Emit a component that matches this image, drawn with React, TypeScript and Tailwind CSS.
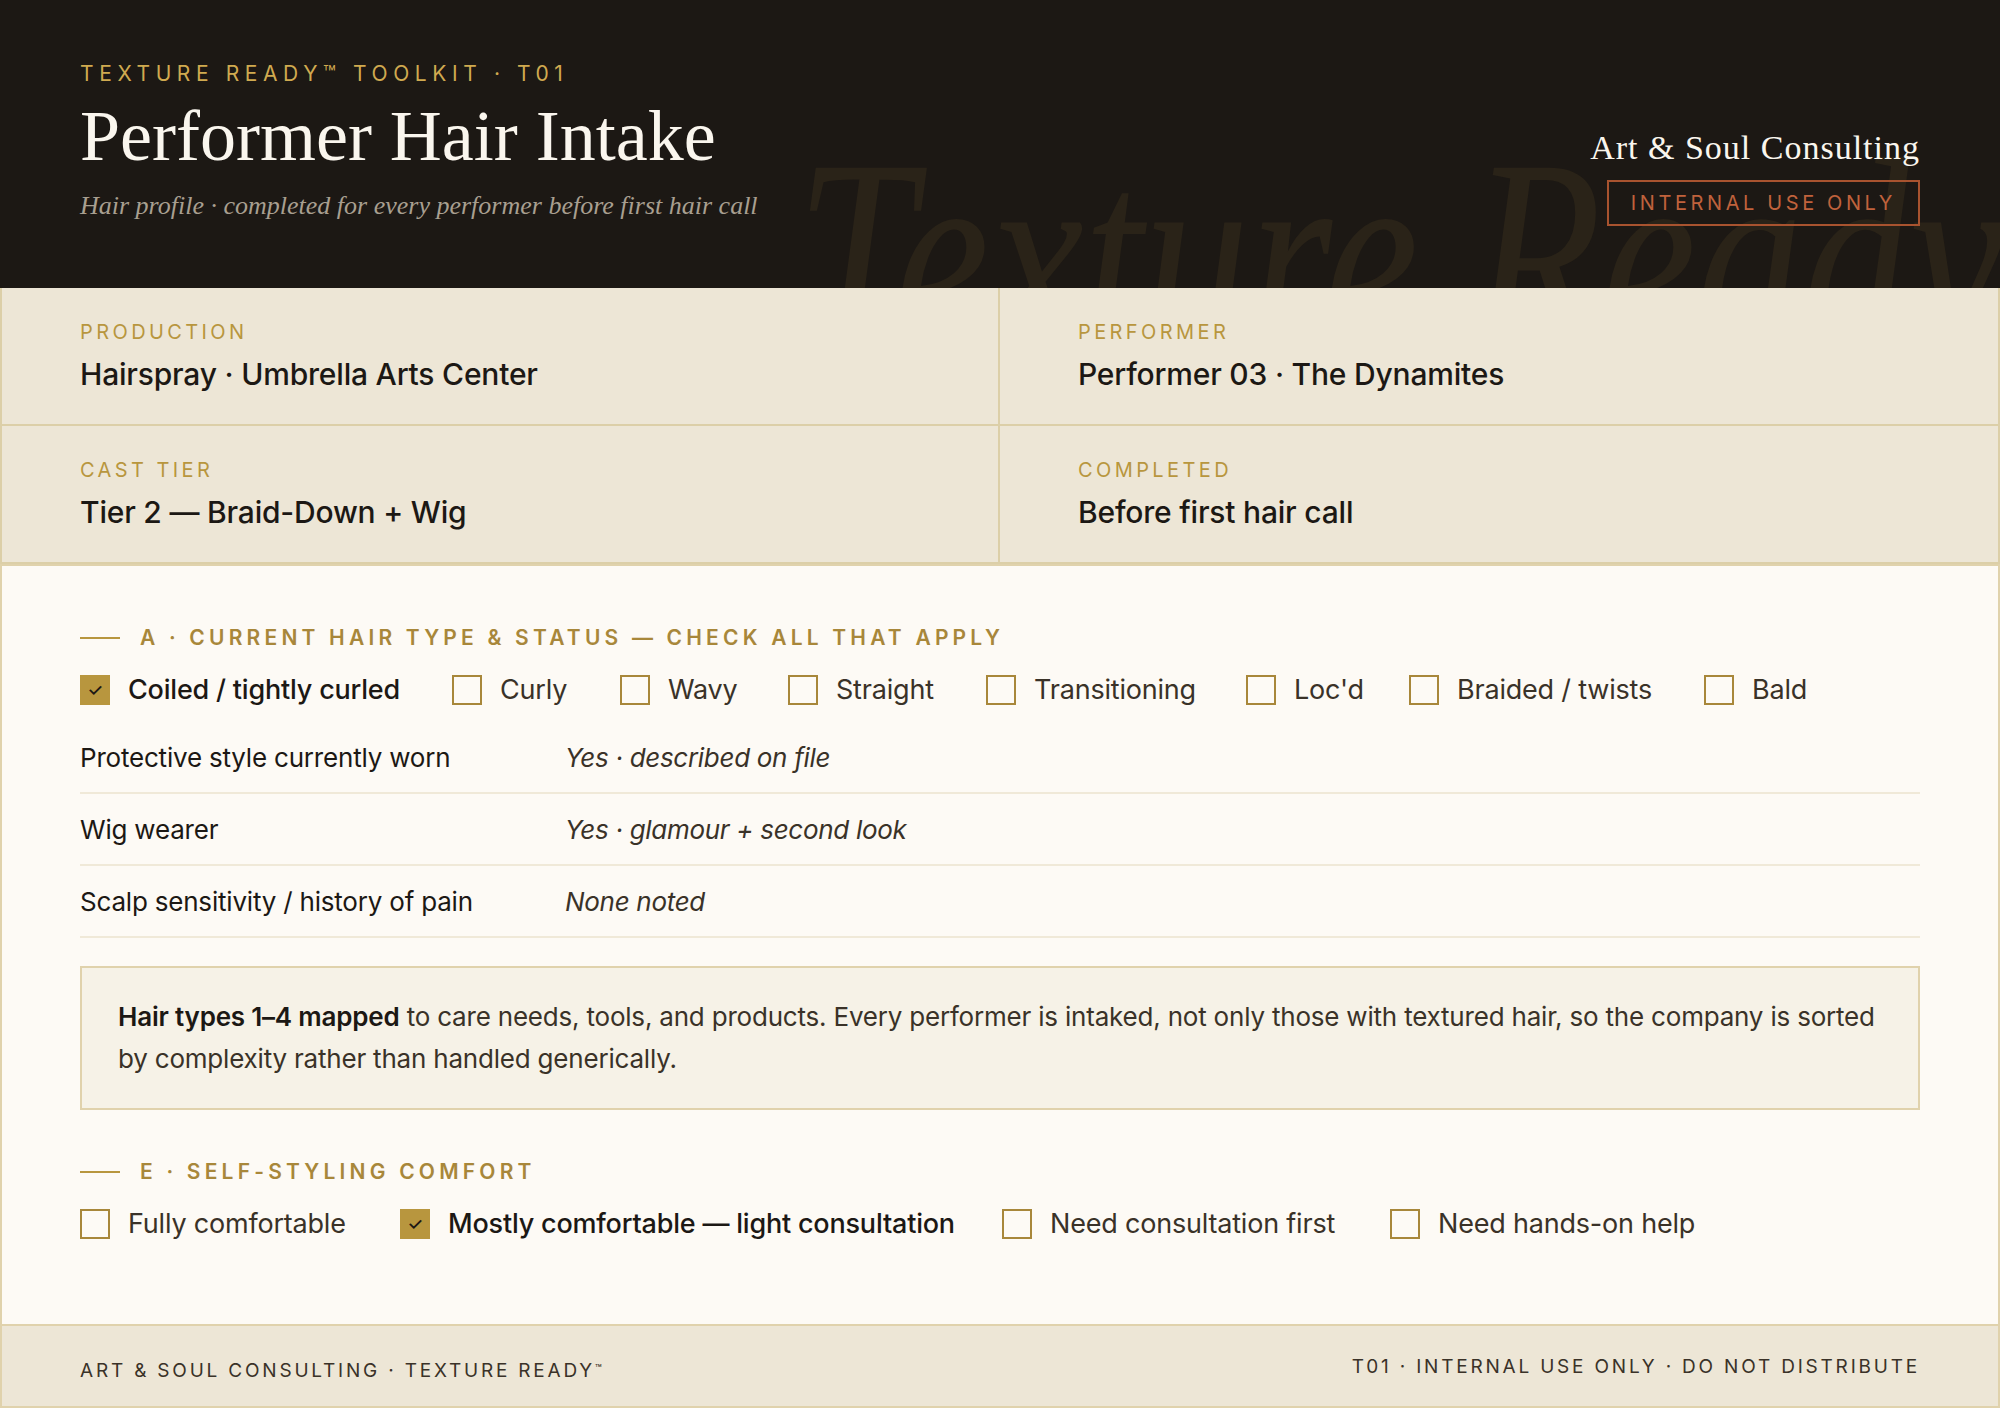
import React from "react";

const sans = "font-['Inter','Liberation_Sans',sans-serif]";
const serif = "font-['Liberation_Serif',serif]";

function Box({ on }: { on?: boolean }) {
  return on ? (
    <span className="flex h-[30px] w-[30px] shrink-0 items-center justify-center bg-[#b8963e] text-[18px] leading-none text-[#1c1814]">✓</span>
  ) : (
    <span className="h-[30px] w-[30px] shrink-0 border-2 border-[#a8873a]"></span>
  );
}

function Check({ label, on }: { label: string; on?: boolean }) {
  return (
    <div className={`flex items-center gap-[18px] text-[27px] leading-[36px] tracking-[-0.2px] ${on ? "font-medium text-[#1c1814]" : "text-[#3a3228]"}`}>
      <Box on={on} />
      <span className="whitespace-nowrap">{label}</span>
    </div>
  );
}

function Section({ children }: { children: React.ReactNode }) {
  return (
    <div className="flex items-center gap-5 text-[21px] font-semibold leading-[28px] tracking-[4.2px] text-[#a8873a]">
      <span className="h-[2px] w-10 bg-[#b8963e]"></span>
      <span className="whitespace-nowrap">{children}</span>
    </div>
  );
}

function Meta({ label, value, right, last }: { label: string; value: string; right?: boolean; last?: boolean }) {
  return (
    <div className={`flex h-[138px] flex-col border-[#dccfa8] pl-[78px] pt-[30px] ${right ? "" : "border-r-2"} ${last ? "border-b-0" : "border-b-2"}`}>
      <div className="text-[20px] leading-[28px] tracking-[3.4px] text-[#b8963e]">{label}</div>
      <div className="mt-[8px] text-[30px] font-medium leading-[40px] tracking-[-0.2px] text-[#1c1814]">{value}</div>
    </div>
  );
}

function Row({ label, value }: { label: string; value: string }) {
  return (
    <div className="flex h-[72px] items-center border-b-2 border-[#f0e9d8] text-[26px] text-[#1c1814]">
      <span className="w-[485px] tracking-[-0.2px]">{label}</span>
      <span className="italic tracking-[-0.3px] text-[#3a3228]">{value}</span>
    </div>
  );
}

export default function App() {
  return (
    <div className={`${sans} flex h-[1408px] w-[2000px] flex-col overflow-hidden bg-[#fdfaf5]`}>
      <header className="relative flex h-[288px] shrink-0 items-start justify-between overflow-hidden bg-[#1c1814] px-20 pt-[60px]">
        <div className={`${serif} pointer-events-none absolute left-[796px] top-[96px] origin-left scale-x-[0.76] whitespace-nowrap text-[280px] italic leading-[1.15] text-[#2a2318]`}>
          Texture Ready
        </div>
        <div className="relative">
          <div className="text-[21px] leading-[28px] tracking-[5.6px] text-[#d0aa50]">TEXTURE READY™ TOOLKIT · T01</div>
          <h1 className={`${serif} mt-[8px] text-[72px] font-normal leading-[80px] text-[#faf6ee]`}>Performer Hair Intake</h1>
          <div className={`${serif} mt-[14px] text-[26px] italic leading-[32px] text-[#a89f90]`}>Hair profile · completed for every performer before first hair call</div>
        </div>
        <div className="relative mt-[66px] flex flex-col items-end">
          <div className={`${serif} text-[34px] leading-[44px] tracking-[1px] text-[#faf6ee]`}>Art &amp; Soul Consulting</div>
          <div className="mt-[10px] flex h-[46px] items-center border-2 border-[#a8532f] px-[22px] text-[20px] leading-none tracking-[3.6px] text-[#c0623c]">INTERNAL USE ONLY</div>
        </div>
      </header>

      <div className="grid shrink-0 grid-cols-2 border-x-2 border-[#dccfa8] bg-[#ede6d6]">
        <Meta label="PRODUCTION" value="Hairspray · Umbrella Arts Center" />
        <Meta label="PERFORMER" value="Performer 03 · The Dynamites" right />
        <Meta label="CAST TIER" value="Tier 2 — Braid-Down + Wig" />
        <Meta label="COMPLETED" value="Before first hair call" right />
      </div>

      <main className="flex flex-1 flex-col border-x-2 border-t-2 border-[#e0d2ac] px-[78px] pt-[58px]">
        <Section>A · CURRENT HAIR TYPE &amp; STATUS — CHECK ALL THAT APPLY</Section>
        <div className="mt-[20px] grid grid-cols-[372px_168px_168px_198px_260px_163px_295px_1fr]">
          <Check label="Coiled / tightly curled" on />
          <Check label="Curly" />
          <Check label="Wavy" />
          <Check label="Straight" />
          <Check label="Transitioning" />
          <Check label="Loc'd" />
          <Check label="Braided / twists" />
          <Check label="Bald" />
        </div>
        <div className="mt-[14px]">
          <Row label="Protective style currently worn" value="Yes · described on file" />
          <Row label="Wig wearer" value="Yes · glamour + second look" />
          <Row label="Scalp sensitivity / history of pain" value="None noted" />
        </div>
        <div className="mt-[28px] h-[144px] border-2 border-[#e0d2ac] bg-[#f6f2e7] px-9 py-[28px] text-[26px] leading-[42px] tracking-[-0.2px] text-[#3a3228]">
          <strong className="font-semibold text-[#1c1814]">Hair types 1–4 mapped</strong> to care needs, tools, and products. Every performer is intaked, not only those with textured hair, so the company is sorted by complexity rather than handled generically.
        </div>
        <div className="mt-[48px]">
          <Section>E · SELF-STYLING COMFORT</Section>
        </div>
        <div className="mt-[20px] grid grid-cols-[320px_602px_388px_1fr]">
          <Check label="Fully comfortable" />
          <Check label="Mostly comfortable — light consultation" on />
          <Check label="Need consultation first" />
          <Check label="Need hands-on help" />
        </div>
      </main>

      <footer className="flex h-[84px] shrink-0 items-start justify-between border-2 border-[#e0d2ac] bg-[#ede6d6] pl-[78px] pr-[78px] pt-[28px] text-[19px] tracking-[2.8px] text-[#3a3228]">
        <div className="mt-[4px] leading-[26px]">ART &amp; SOUL CONSULTING · TEXTURE READY<sup className="text-[11px]">™</sup></div>
        <div className="leading-[26px]">T01 · INTERNAL USE ONLY · DO NOT DISTRIBUTE</div>
      </footer>
    </div>
  );
}
